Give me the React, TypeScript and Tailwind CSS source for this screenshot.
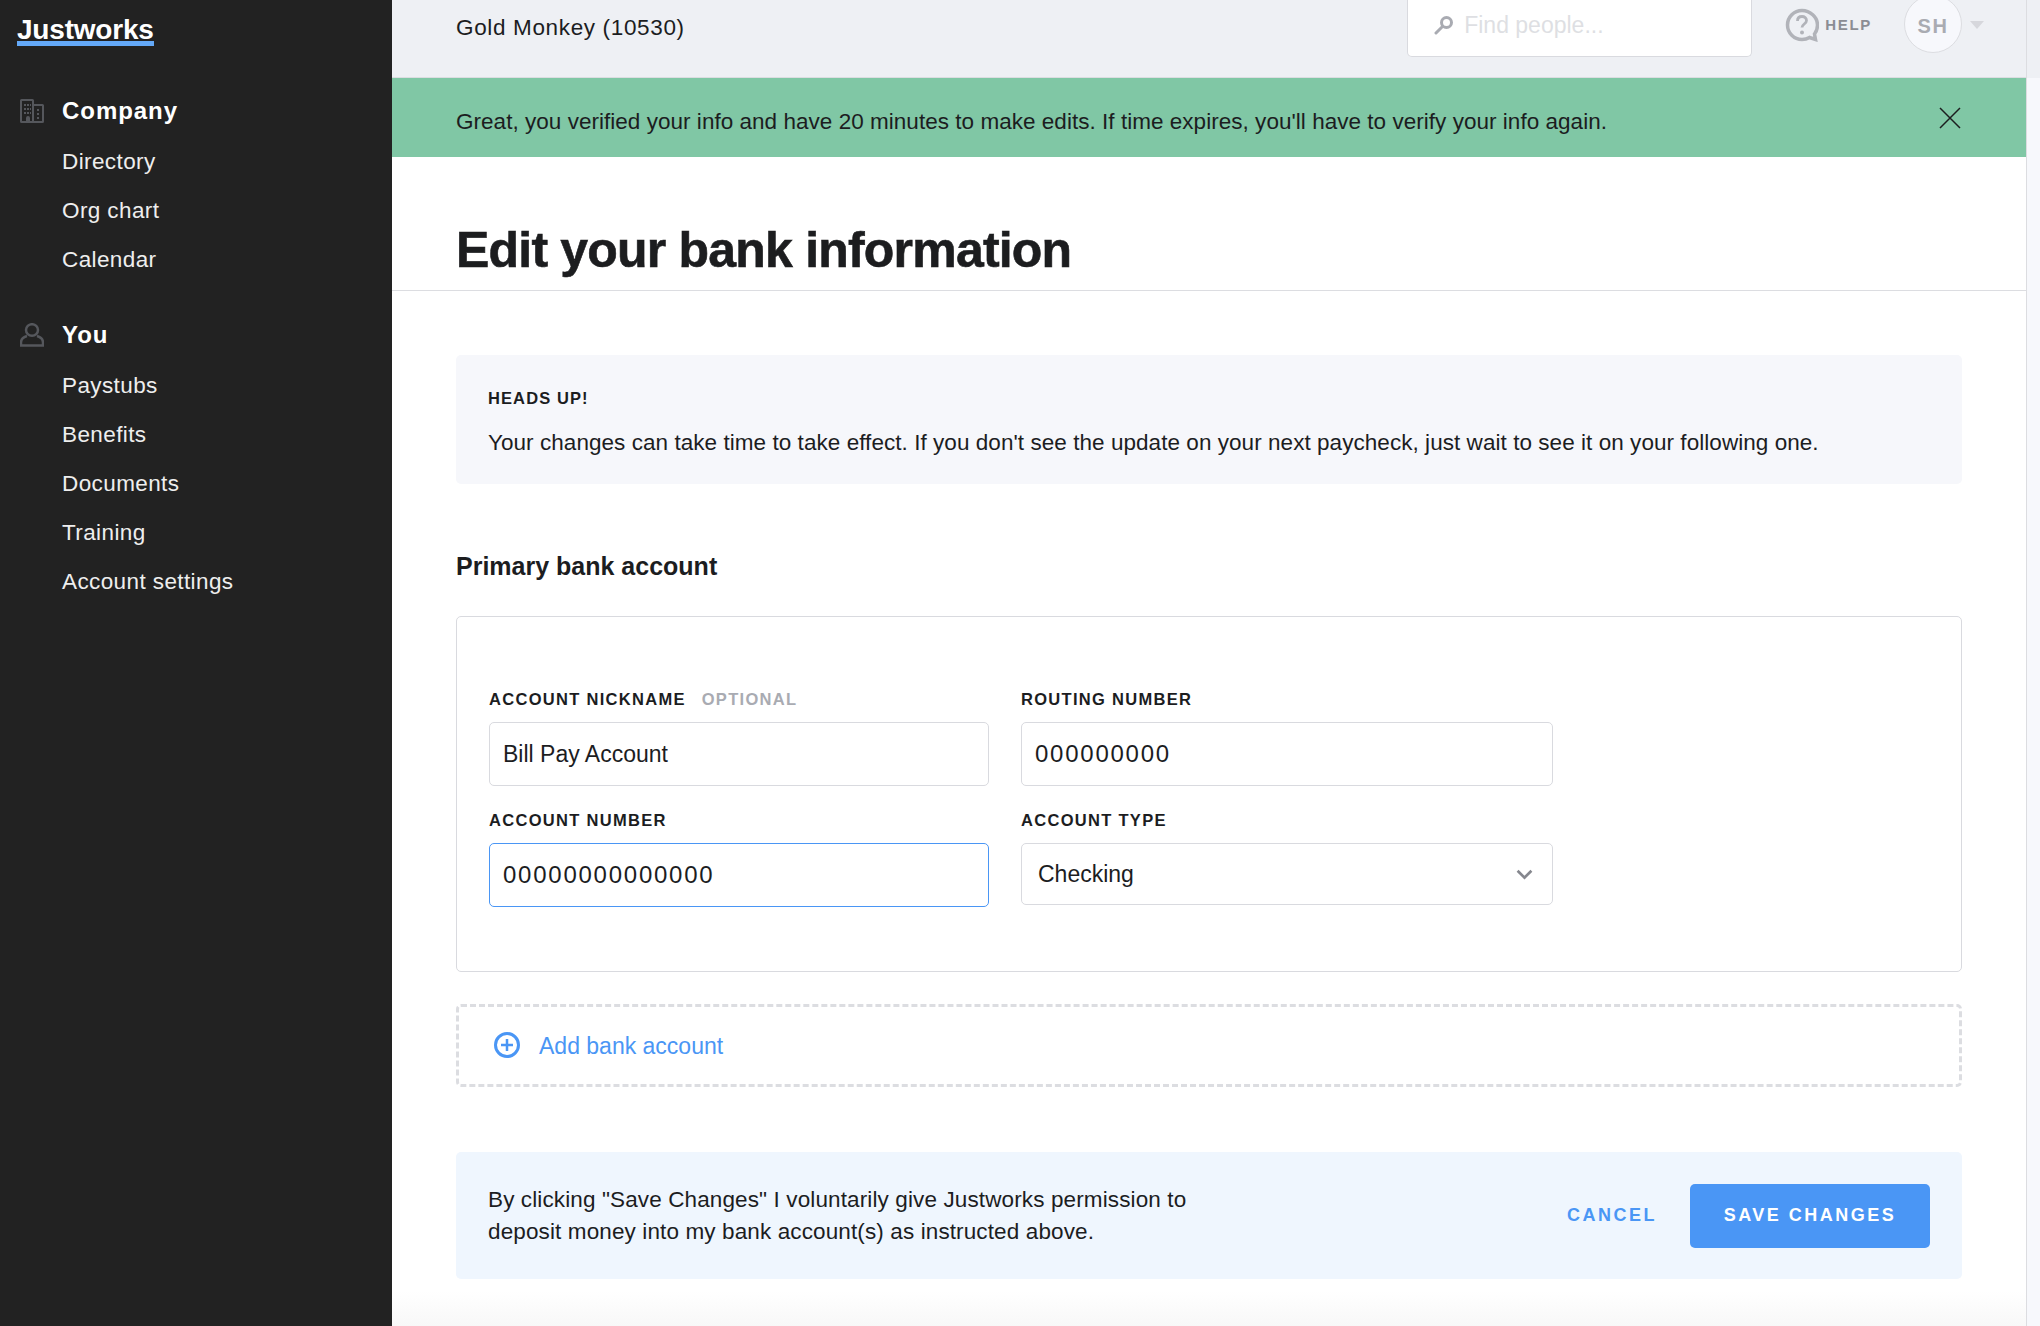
const sans = '[font-family:"Liberation_Sans",Arial,sans-serif]'

function BuildingIcon() {
  return (
    <svg width="24" height="24" viewBox="0 0 24 24" fill="#55575c">
      <path fillRule="evenodd" d="M1.5 0h11A1.5 1.5 0 0 1 14 1.500V5h8.500A1.500 1.500 0 0 1 24 6.500v16a1.500 1.500 0 0 1-1.500 1.500h-21A1.500 1.500 0 0 1 0 22.500v-21A1.500 1.500 0 0 1 1.500 0zM2 2v20h4v-3a2 2 0 0 1 4 0v3h2V2zm12 5v15h8V7z" />
      <path d="M4 5h2v2H4zM7 5h2v2H7zM10 5h1v2h-1zM4 9h2v2H4zM7 9h2v2H7zM10 9h1v2h-1zM4 13h2v2H4zM7 13h2v2H7zM10 13h1v2h-1zM17 10h2v2h-2zM17 14h2v2h-2zM17 18h2v2h-2z" />
    </svg>
  )
}

function PersonIcon() {
  return (
    <svg width="24" height="24" viewBox="0 0 24 24" fill="none" stroke="#55575c" strokeWidth="2.500">
      <ellipse cx="12" cy="7" rx="6" ry="5.800" />
      <path d="M7 13c-3.500 1-6 3.500-6 6.500v3h22v-3c0-3-2.500-5.500-6-6.500" />
    </svg>
  )
}

function SearchIcon() {
  return (
    <svg width="20" height="20" viewBox="0 0 20 20" fill="none" stroke="#a9abb2" strokeWidth="3">
      <circle cx="12.500" cy="7.500" r="5" />
      <path d="M8.500 11.500 2 18" strokeLinecap="round" />
    </svg>
  )
}

function HelpIcon() {
  return (
    <svg width="34" height="34" viewBox="0 0 34 34" fill="none">
      <path d="M17 2.500C9 2.500 2.500 9 2.500 17S9 31.500 17 31.500c3 0 5.500-.8 7.500-2l6 2-1-5.500c2-2.500 3-5.500 3-9C32.500 9 25 2.500 17 2.500z" stroke="#b1b3b9" strokeWidth="3.500" />
      <path d="M12.500 13c0-3 2-4.500 4.500-4.500s4.500 1.500 4.500 4c0 3.500-4.500 3.500-4.500 7" stroke="#b1b3b9" strokeWidth="2.800" />
      <circle cx="17" cy="24.500" r="2" fill="#b1b3b9" />
    </svg>
  )
}

function NavGroup({ title, icon, items }: { title: string; icon: React.ReactNode; items: string[] }) {
  return (
    <div className="mb-[28px]">
      <div className="flex h-[49px] items-center pb-[4px]">
        <div className="flex w-[62px] justify-start pl-[20px]">{icon}</div>
        <span className="text-[24px] font-bold tracking-[0.95px] text-white">{title}</span>
      </div>
      {items.map(item => (
        <div key={item} className="flex h-[49px] items-center pl-[62px] text-[22.500px] tracking-[0.4px] text-[#eeeeee]">
          {item}
        </div>
      ))}
    </div>
  )
}

function Label({ children }: { children: React.ReactNode }) {
  return <label className="block h-[32px] text-[16.500px] font-bold leading-[18px] tracking-[1.300px] text-[#1c1d1f]">{children}</label>
}

function Field({ value, focused, numeric }: { value: string; focused?: boolean; numeric?: boolean }) {
  return (
    <input
      readOnly
      value={value}
      className={`h-[64px] w-full rounded-[5px] border bg-white px-[13px] text-[#1c1d1f] outline-none ${focused ? 'border-[#4a96f5]' : 'border-[#d9dadf]'} ${numeric ? 'text-[24px] tracking-[1.750px]' : 'text-[23px]'}`}
    />
  )
}

export default function App() {
  return (
    <div className={`flex h-screen overflow-hidden bg-white text-[#1c1d1f] ${sans}`}>
      <aside className="w-[392px] shrink-0 bg-[#222222]">
        <div className="px-[17px] pt-[18px]">
          <span className="inline-block border-b-[5px] border-[#64a9f8] text-[28px] font-bold leading-[23px] tracking-[-0.200px] text-white">
            Justworks
          </span>
        </div>
        <nav className="mt-[42px]">
          <NavGroup title="Company" icon={<BuildingIcon />} items={['Directory', 'Org chart', 'Calendar']} />
          <NavGroup title="You" icon={<PersonIcon />} items={['Paystubs', 'Benefits', 'Documents', 'Training', 'Account settings']} />
        </nav>
      </aside>

      <div className="flex min-w-0 flex-1 flex-col">
        <header className="flex h-[78px] shrink-0 items-start border-b border-[#dcdde1] bg-[#eef0f4] pl-[64px]">
          <span className="mt-[13px] text-[22.500px] leading-[30px] tracking-[0.65px]">Gold Monkey (10530)</span>
          <div className="ml-auto flex items-start">
            <div className="flex h-[57px] w-[345px] items-center gap-[10px] rounded-b-[5px] border border-t-0 border-[#d9dadf] bg-white pb-[6px] pl-[26px]">
              <SearchIcon />
              <span className="text-[23px] text-[#dedfe3]">Find people...</span>
            </div>
            <div className="ml-[33px] mt-[8px] flex items-center gap-[6px]">
              <HelpIcon />
              <span className="pt-[1px] text-[15px] font-bold tracking-[1.700px] text-[#8b8d94]">HELP</span>
            </div>
            <div className="ml-[32px] mt-[-5px] flex h-[58px] w-[58px] items-center justify-center rounded-full border border-[#dcdde1] bg-[#f7f8fc] pt-[4px] text-[20px] font-bold tracking-[1.500px] text-[#a9abb2]">
              SH
            </div>
            <div className="ml-[8px] mr-[42px] mt-[21px] h-0 w-0 border-x-[7px] border-t-[8px] border-x-transparent border-t-[#d6d7dc]" />
          </div>
        </header>

        <div className="flex h-[79px] shrink-0 items-center justify-between bg-[#80c7a5] pl-[64px] pr-[65px]">
          <span className="pt-[8px] text-[22.500px] tracking-[0.03px]">Great, you verified your info and have 20 minutes to make edits. If time expires, you'll have to verify your info again.</span>
          <svg width="22" height="22" viewBox="0 0 22 22" stroke="#1c1d1f" strokeWidth="1.500" className="shrink-0">
            <path d="M1 1l20 20M21 1 1 21" />
          </svg>
        </div>

        <main className="flex min-h-0 flex-1 flex-col">
          <div className="h-[134px] shrink-0 border-b border-[#dcdde1] pl-[64px] pt-[64px]">
            <h1 className="text-[50px] font-bold leading-[58px] tracking-[-0.800px] [-webkit-text-stroke:0.6px_#1c1d1f]">Edit your bank information</h1>
          </div>

          <div className="flex flex-1 flex-col px-[64px] pt-[64px]">
            <div className="h-[129px] shrink-0 rounded-[5px] bg-[#f6f7fb] px-[32px] pt-[33px]">
              <div className="text-[16.500px] font-bold leading-[20px] tracking-[1.100px]">HEADS UP!</div>
              <p className="mt-[20px] text-[22.500px] leading-[30px] tracking-[0.05px]">
                Your changes can take time to take effect. If you don't see the update on your next paycheck, just wait to see it on your following one.
              </p>
            </div>

            <h2 className="mt-[65px] text-[25px] font-bold leading-[34px]">Primary bank account</h2>

            <div className="mt-[33px] h-[356px] shrink-0 rounded-[5px] border border-[#d9dadf] px-[32px] pt-[73px]">
              <div className="grid grid-cols-[500px_532px] gap-x-[32px] gap-y-[25px]">
                <div>
                  <Label>
                    ACCOUNT NICKNAME <span className="ml-[10px] text-[#a9abb2]">OPTIONAL</span>
                  </Label>
                  <Field value="Bill Pay Account" />
                </div>
                <div>
                  <Label>ROUTING NUMBER</Label>
                  <Field value="000000000" numeric />
                </div>
                <div>
                  <Label>ACCOUNT NUMBER</Label>
                  <Field value="00000000000000" focused numeric />
                </div>
                <div>
                  <Label>ACCOUNT TYPE</Label>
                  <div className="flex h-[62px] items-center justify-between rounded-[5px] border border-[#d9dadf] bg-white pl-[16px] pr-[19px] text-[23px]">
                    Checking
                    <svg width="17" height="11" viewBox="0 0 16 10" fill="none" stroke="#85878e" strokeWidth="2.500">
                      <path d="M1.500 1.500 8 8l6.500-6.500" />
                    </svg>
                  </div>
                </div>
              </div>
            </div>

            <div className="mt-[32px] flex h-[83px] shrink-0 items-center rounded-[5px] border-[3px] border-dashed border-[#dcdde1] pl-[35px] pt-[1px]">
              <svg width="26" height="26" viewBox="0 0 26 26" fill="none" stroke="#4a96f5" className="mr-[19px] mb-[2px]">
                <circle cx="13" cy="13" r="11.500" strokeWidth="3" />
                <path d="M13 7v12M7 13h12" strokeWidth="2.500" />
              </svg>
              <span className="text-[23px] text-[#4a96f5]">Add bank account</span>
            </div>

            <div className="mt-[65px] flex h-[127px] shrink-0 items-center justify-between rounded-[5px] bg-[#eff6fe] pl-[32px] pr-[32px]">
              <p className="w-[760px] text-[22.500px] leading-[32px] tracking-[0.12px]">
                By clicking "Save Changes" I voluntarily give Justworks permission to deposit money into my bank account(s) as instructed above.
              </p>
              <div className="flex items-center gap-[33px]">
                <span className="text-[18px] font-bold tracking-[2.500px] text-[#4a96f5]">CANCEL</span>
                <button className="h-[64px] w-[240px] rounded-[5px] bg-[#4a96f5] text-[18px] font-bold tracking-[2.500px] text-white">SAVE CHANGES</button>
              </div>
            </div>

            <div className="-mx-[64px] mt-[12px] flex-1 bg-gradient-to-b from-white to-[#f8f8f8]" />
          </div>
        </main>
      </div>

      <div className="flex w-[14px] shrink-0 flex-col border-l border-[#dcdde1]">
        <div className="h-[78px] bg-[#eef0f4]" />
        <div className="flex-1 bg-[#f7f8fc]" />
      </div>
    </div>
  )
}
